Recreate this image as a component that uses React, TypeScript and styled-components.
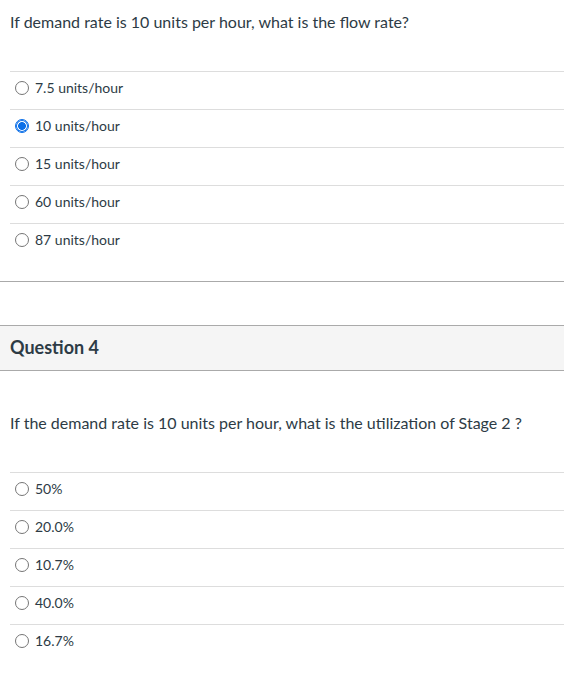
import styled, { createGlobalStyle } from "styled-components";

const GlobalStyle = createGlobalStyle`
  body {
    margin: 0;
    background: #fff;
    font-family: "Lato", "Liberation Sans", sans-serif;
    color: #2d3b45;
  }
`;

const Page = styled.div`
  display: flex;
  flex-direction: column;
`;

const QuestionBody = styled.div`
  padding: 10px 0 0 10px;
`;

const QuestionText = styled.div`
  font-size: 16px;
  line-height: 24px;
  margin-bottom: 37px;
`;

const Answers = styled.div`
  display: flex;
  flex-direction: column;
`;

const AnswerRow = styled.label`
  box-sizing: border-box;
  display: flex;
  align-items: center;
  height: 38px;
  border-top: 1px solid #dddddd;
  font-size: 14px;
  gap: 6px;
  padding: 0 0 6px 5px;
`;

const Radio = styled.span<{ $checked?: boolean }>`
  box-sizing: border-box;
  width: 14px;
  height: 14px;
  border-radius: 50%;
  border: 1px solid ${(p) => (p.$checked ? "#0b6fe8" : "#767676")};
  background: ${(p) =>
    p.$checked
      ? "radial-gradient(circle, #0b6fe8 0 3.6px, #fff 4.2px)"
      : "#fff"};
  ${(p) => (p.$checked ? "box-shadow: inset 0 0 0 1px #0b6fe8;" : "")}
  flex-shrink: 0;
`;

const Separator = styled.div`
  height: 1px;
  background: #aaaaaa;
  margin-top: 20px;
`;

const QuestionHeader = styled.div`
  margin-top: 43px;
  height: 42px;
  border-top: 1px solid #aaaaaa;
  border-bottom: 1px solid #aaaaaa;
  background: #f5f5f5;
  display: flex;
  align-items: center;
  padding: 0 0 2px 10px;
  font-size: 18px;
  font-weight: 700;
`;

const SecondBody = styled(QuestionBody)`
  padding-top: 40px;
`;

type Question = {
  text: string;
  answers: string[];
  selected?: number;
};

const q3: Question = {
  text: "If demand rate is 10 units per hour, what is the flow rate?",
  answers: [
    "7.5 units/hour",
    "10 units/hour",
    "15 units/hour",
    "60 units/hour",
    "87 units/hour",
  ],
  selected: 1,
};

const q4: Question = {
  text: "If the demand rate is 10 units per hour, what is the utilization of Stage 2 ?",
  answers: ["50%", "20.0%", "10.7%", "40.0%", "16.7%"],
};

function AnswerList({ q }: { q: Question }) {
  return (
    <Answers>
      {q.answers.map((a, i) => (
        <AnswerRow key={a}>
          <Radio $checked={q.selected === i} />
          {a}
        </AnswerRow>
      ))}
    </Answers>
  );
}

export default function App() {
  return (
    <Page>
      <GlobalStyle />
      <QuestionBody>
        <QuestionText>{q3.text}</QuestionText>
        <AnswerList q={q3} />
      </QuestionBody>
      <Separator />
      <QuestionHeader>Question 4</QuestionHeader>
      <SecondBody>
        <QuestionText>{q4.text}</QuestionText>
        <AnswerList q={q4} />
      </SecondBody>
    </Page>
  );
}
